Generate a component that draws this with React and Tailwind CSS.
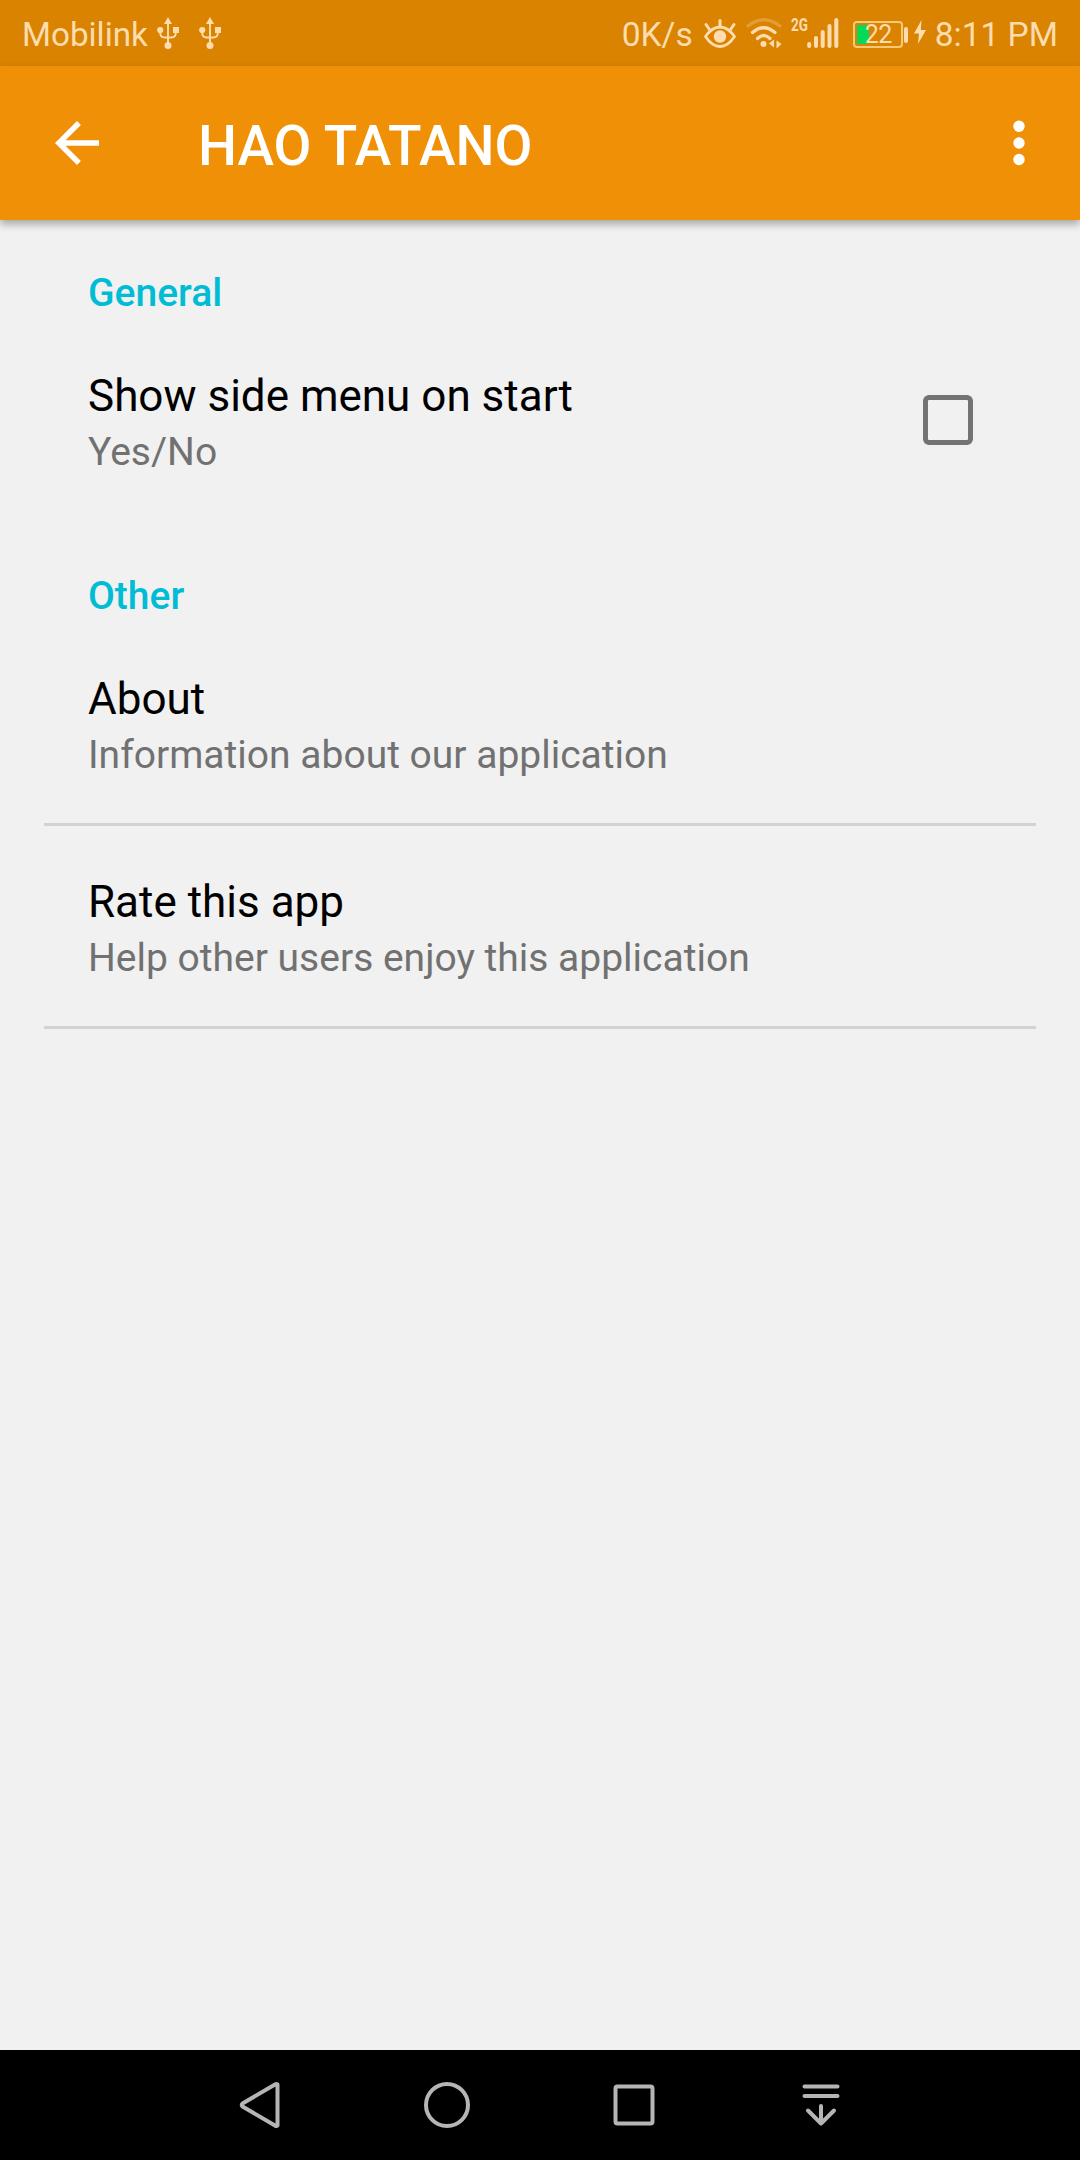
import { useState } from "react"

const otherItems = [
    { title: "About", summary: "Information about our application" },
    { title: "Rate this app", summary: "Help other users enjoy this application" },
]

function UsbIcon({ className }) {
    return (
        <svg width="22" height="32" viewBox="0 0 22 32" fill="currentColor" className={className}>
            <path d="M11 0l4 7H7z" />
            <circle cx="11" cy="28.5" r="3.5" />
            <circle cx="3.2" cy="13" r="3.1" />
            <rect x="16" y="10" width="6" height="6" />
            <path d="M11 5v22M3.2 13v3q0 4.5 4.5 4.5h6.6q4.5 0 4.5-4.5v-3" fill="none" stroke="currentColor" strokeWidth="1.9" />
        </svg>
    )
}

function EyeIcon() {
    return (
        <svg width="34" height="32" viewBox="0 0 34 32" fill="none" stroke="currentColor" strokeWidth="3" strokeLinecap="round">
            <path d="M2.5 19.5Q9 10 17 10t14.5 9.5Q25 29.5 17 29.5T2.5 19.5z" strokeWidth="2.8" strokeLinejoin="round" />
            <circle cx="17" cy="19.5" r="6.2" fill="currentColor" stroke="none" />
            <path d="M17 3.5v5.5M3 7.5l3.5 5M31 7.5l-3.5 5" />
        </svg>
    )
}

function WifiIcon() {
    return (
        <svg width="36" height="32" viewBox="0 0 36 32" fill="none" stroke="currentColor" strokeWidth="3.2" strokeLinecap="round">
            <path d="M2 9Q17.5-3.5 34 9" opacity="0.3" />
            <path d="M6.5 15.5Q17.5 6 29 15.5" />
            <path d="M11.5 21.5Q17.5 15.5 24 21.5" />
            <circle cx="17.5" cy="27" r="3" fill="currentColor" stroke="none" />
            <path d="M28 22.5v8l-5-4zM30.5 23.5v8l5-4.500z" fill="currentColor" stroke="none" />
        </svg>
    )
}

function SignalIcon() {
    return (
        <svg width="32" height="32" viewBox="0 0 32 32" stroke="currentColor" strokeWidth="4" strokeLinecap="round">
            <path d="M2.2 27v2M9 21v8M15.7 15v14M22.5 9v20M29.3 3v26" />
        </svg>
    )
}

function StatusBar() {
    return (
        <div className="flex h-[66px] items-center bg-[#d98300] pl-[22px] pr-[22px] text-[33.5px] leading-[66px] text-[#fddcae]">
            <span className="w-[125px] whitespace-nowrap pt-[3px] text-[33.2px]">Mobilink</span>
            <UsbIcon className="ml-[10px]" />
            <UsbIcon className="ml-[20px]" />

            <div className="ml-auto flex items-center">
                <span className="pt-[3px]">0K/s</span>
                <div className="ml-[10px]"><EyeIcon /></div>
                <div className="ml-[9px]"><WifiIcon /></div>
                <div className="relative ml-[25px]">
                    <span className="absolute -left-[16px] -top-[3px] origin-left scale-x-75 text-[18px] font-bold leading-[21px]">2G</span>
                    <SignalIcon />
                </div>

                {/* Battery */}
                <div className="relative ml-[14px] mt-[3px] h-[27px] w-[50px] rounded-[4px] border-2 border-[#f9c877] p-[2px]">
                    <div className="h-full w-[12px] bg-[#05d95c]" />
                    <span className="absolute left-[10px] top-[-2px] text-[25px] leading-[27px] tracking-[-0.5px]">22</span>
                </div>
                <div className="ml-[1px] mt-[3px] h-[16px] w-[4px] rounded-[2px] bg-[#fddcae]" />
                <svg width="12" height="24" viewBox="0 0 12 24" fill="currentColor" className="-mt-[2px] ml-[6px]">
                    <path d="M7.5 0L0 13.5h5L4 24l8-14H6.8z" />
                </svg>
                <span className="ml-[9px] whitespace-nowrap pt-[3px]">8:11 PM</span>
            </div>
        </div>
    )
}

function AppBar() {
    return (
        <header className="z-10 flex h-[154px] items-center bg-[#ef9006] px-[44px] text-white shadow-[0_4px_8px_rgba(0,0,0,0.32)]">
            <button className="-mt-px">
                <svg width="66" height="66" viewBox="0 0 24 24" fill="currentColor">
                    <path d="M20 11H7.83l5.59-5.59L12 4l-8 8 8 8 1.41-1.41L7.83 13H20v-2z" />
                </svg>
            </button>
            <h1 className="ml-[88px] pt-[5px] text-[55px] font-medium leading-[64px]">HAO TATANO</h1>
            <button className="-mr-[16px] ml-auto">
                <svg width="66" height="66" viewBox="0 0 66 66" fill="currentColor">
                    <circle cx="33" cy="16.3" r="5.7" />
                    <circle cx="33" cy="33" r="5.7" />
                    <circle cx="33" cy="49.5" r="5.7" />
                </svg>
            </button>
        </header>
    )
}

function Category({ children }) {
    return (
        <h2 className="h-[100px] px-[44px] pt-[51px] text-[39px] font-medium leading-[45px] text-[#00bcd4]">
            {children}
        </h2>
    )
}

function Preference({ title, summary, children }) {
    return (
        <div className="flex h-[200px] items-center justify-between px-[44px]">
            <div className="pt-[13px]">
                <p className="text-[44px] leading-[52px] text-black">{title}</p>
                <p className="text-[39px] leading-[61px] text-[#717171]">{summary}</p>
            </div>
            {children}
        </div>
    )
}

function NavBar() {
    return (
        <nav className="flex h-[110px] items-center justify-center bg-black text-[#b5b5b5]">
            {/* Back */}
            <button className="flex w-[187px] justify-center">
                <svg width="48" height="48" viewBox="0 0 48 48" fill="none" stroke="currentColor" strokeWidth="4" strokeLinejoin="round">
                    <path d="M41.5 3.5v41q-1 1-2.5 0L6.5 25.5q-1.5-1.5 0-3L39 3.5q1.5-1 2.5 0z" />
                </svg>
            </button>
            {/* Home */}
            <button className="flex w-[187px] justify-center">
                <svg width="48" height="48" viewBox="0 0 48 48" fill="none" stroke="currentColor" strokeWidth="4">
                    <circle cx="24" cy="24" r="21" />
                </svg>
            </button>
            {/* Recents */}
            <button className="flex w-[187px] justify-center">
                <svg width="48" height="48" viewBox="0 0 48 48" fill="none" stroke="currentColor" strokeWidth="4">
                    <rect x="5.5" y="5.5" width="37" height="37" rx="2" />
                </svg>
            </button>
            {/* Notifications */}
            <button className="flex w-[187px] justify-center">
                <svg width="48" height="48" viewBox="0 0 48 48" fill="none" stroke="currentColor" strokeWidth="4" strokeLinecap="round" strokeLinejoin="round">
                    <path d="M7.5 5.5h33M7.5 15h33M24 25v17.5M11 29.5l13 13 13-13" />
                </svg>
            </button>
        </nav>
    )
}

export default function App() {
    const [showMenu, setShowMenu] = useState(false)

    return (
        <div className="flex h-[2160px] w-[1080px] flex-col overflow-hidden bg-[#f1f1f1] font-[Roboto,sans-serif]">
            <StatusBar />
            <AppBar />

            <main className="flex-1 px-[44px]">
                <Category>General</Category>
                <Preference title="Show side menu on start" summary="Yes/No">
                    <button
                        role="checkbox"
                        aria-checked={showMenu}
                        aria-label="Show side menu on start"
                        onClick={() => setShowMenu(!showMenu)}
                        className="mr-[19px] h-[50px] w-[50px] rounded-[6px] border-[5.5px] border-[#737373]"
                    />
                </Preference>

                <div className="mt-[3px]">
                    <Category>Other</Category>
                    {otherItems.map((item) => (
                        <div key={item.title} className="border-b-[3px] border-[#d3d3d3]">
                            <Preference title={item.title} summary={item.summary} />
                        </div>
                    ))}
                </div>
            </main>

            <NavBar />
        </div>
    )
}
